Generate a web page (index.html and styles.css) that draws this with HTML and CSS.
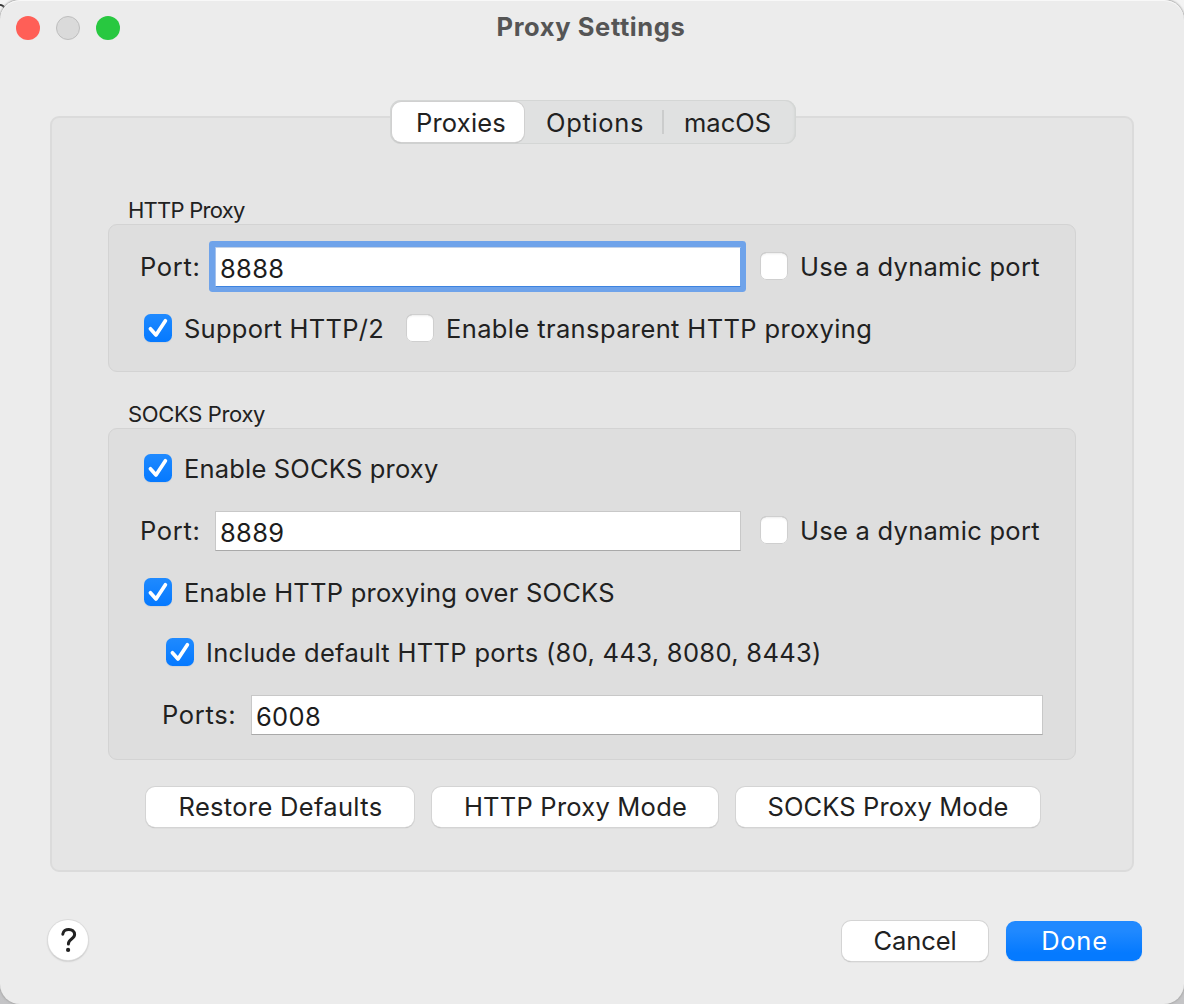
FILE: index.html
```
<!DOCTYPE html>
<html lang="en">
<head>
<meta charset="utf-8">
<title>Proxy Settings</title>
<link rel="stylesheet" href="styles.css">
</head>
<body>
<svg width="0" height="0" class="defs" aria-hidden="true">
  <symbol id="check" viewBox="0 0 28 28">
    <path d="M6.4 14.8 L12 21 L21.4 6.8" fill="none" stroke="#fff" stroke-width="3.7" stroke-linecap="round" stroke-linejoin="round"/>
  </symbol>
</svg>
<svg class="backdrop" viewBox="0 0 8 20" aria-hidden="true"><path d="M-1 5 Q3 4.5 4.5 8 M0 15 v3" fill="none" stroke="#333" stroke-width="1.8"/></svg>
<div class="window">
  <header class="titlebar">
    <span class="light close"></span>
    <span class="light minimize"></span>
    <span class="light expand"></span>
    <h1 class="title">Proxy Settings</h1>
  </header>

  <main class="panel">
    <nav class="tabs">
      <button class="tab active">Proxies</button>
      <button class="tab options">Options</button>
      <button class="tab macos">macOS</button>
    </nav>

    <h2 class="caption http">HTTP Proxy</h2>
    <section class="group http-group">
      <div class="row">
        <span class="label port">Port:</span>
        <div class="field focused"><span>8888</span></div>
        <span class="box dynamic"></span>
        <span class="label dynamic-text">Use a dynamic port</span>
      </div>
      <div class="row checks">
        <span class="box on"><svg><use href="#check"/></svg></span>
        <span class="label support">Support HTTP/2</span>
        <span class="box"></span>
        <span class="label transparent">Enable transparent HTTP proxying</span>
      </div>
    </section>

    <h2 class="caption socks">SOCKS Proxy</h2>
    <section class="group socks-group">
      <div class="row checks">
        <span class="box on"><svg><use href="#check"/></svg></span>
        <span class="label enable-socks">Enable SOCKS proxy</span>
      </div>
      <div class="row">
        <span class="label port">Port:</span>
        <div class="field"><span>8889</span></div>
        <span class="box dynamic"></span>
        <span class="label dynamic-text">Use a dynamic port</span>
      </div>
      <div class="row checks">
        <span class="box on"><svg><use href="#check"/></svg></span>
        <span class="label over-socks">Enable HTTP proxying over SOCKS</span>
      </div>
      <div class="row checks nested">
        <span class="box on"><svg><use href="#check"/></svg></span>
        <span class="label default-ports">Include default HTTP ports (80, 443, 8080, 8443)</span>
      </div>
      <div class="row nested">
        <span class="label ports">Ports:</span>
        <div class="field wide"><span>6008</span></div>
      </div>
    </section>

    <div class="modes">
      <button class="button restore">Restore Defaults</button>
      <button class="button http-mode">HTTP Proxy Mode</button>
      <button class="button socks-mode">SOCKS Proxy Mode</button>
    </div>
  </main>

  <footer class="footer">
    <button class="help" aria-label="Help">
      <svg viewBox="0 0 40 40"><path d="M14.8 14.2 C15.3 7.7 26.6 7.8 26.6 14.6 C26.6 19.2 20.4 19 20.4 23.9" fill="none" stroke="#222" stroke-width="3" stroke-linecap="round"/><circle cx="20.1" cy="29.9" r="2.1" fill="#222"/></svg>
    </button>
    <button class="button cancel">Cancel</button>
    <button class="button done">Done</button>
  </footer>
</div>
</body>
</html>
```
FILE: styles.css
```
* { box-sizing: border-box; }
body {
  margin: 0;
  height: 1004px;
  overflow: hidden;
  background: linear-gradient(#f4f4f4, #c4c4c6);
  color: #212121;
  font: 400 25.5px/36px Inter, "Liberation Sans", sans-serif;
}
.defs { display: none; }
.backdrop { position: absolute; left: 0; top: 0; width: 8px; height: 20px; z-index: -1; }
button { font: inherit; color: inherit; border: 0; padding: 0; white-space: nowrap; }
.window {
  height: 1004px;
  display: flex;
  flex-direction: column;
  background: #ececec;
  border-radius: 20px;
  box-shadow: inset 0 1px 0 #f8f8f8, 0 0 2px 1px #a8a8a8;
}

.titlebar { display: flex; gap: 16px; padding: 16px 16px 0; height: 116px; }
.light { width: 24px; height: 24px; border-radius: 50%; flex: none; }
.close { background: #ff5f57; }
.minimize { background: #dadada; border: 1px solid #bebebe; }
.expand { background: #28c840; }
.title {
  margin: -7px 0 0 360.6px;
  height: 36px;
  font: 700 25.5px/36px Inter, "Liberation Sans", sans-serif;
  letter-spacing: 0.6px;
  color: #555;
  white-space: nowrap;
}

.panel {
  display: flex;
  flex-direction: column;
  width: 1084px;
  height: 756px;
  margin-left: 50px;
  padding: 0 56px;
  background: #e5e5e5;
  border: 2px solid #dbdbdb;
  border-radius: 9px;
}
.tabs {
  display: flex;
  width: 406px;
  height: 44px;
  margin: -18px 0 0 282px;
  padding: 2px;
  flex: none;
  background: #e0e1e1;
  border-radius: 11px;
  box-shadow: inset 0 0 0 1px #d4d6d5, inset -3px 0 2px -1px #d6d8d7;
}
.tab { height: 40px; padding-top: 2px; text-align: left; background: none; border-radius: 9px; line-height: 38px; }
.tab.active {
  width: 132px;
  padding-left: 24px;
  letter-spacing: 0.2px;
  background: #fff;
  box-shadow: 0 0 0 1px #d0d0d0, 0 1px 1px 0 #a3a3a3;
}
.tab.options { width: 139px; padding-left: 22px; letter-spacing: 0.67px; position: relative; }
.tab.options::after {
  content: "";
  position: absolute;
  right: -1px;
  top: 8px;
  width: 2px;
  height: 24px;
  background: #cbcccc;
}
.tab.macos { padding-left: 21px; letter-spacing: 0; }

.caption { margin: 0; padding-left: 20px; height: 28px; flex: none; font-size: 22px; font-weight: 400; line-height: 28px; }
.caption.http { margin-top: 52px; letter-spacing: -0.74px; }
.caption.socks { margin-top: 28px; letter-spacing: -0.35px; }

.group {
  width: 968px;
  flex: none;
  background: #dedede;
  border: 1px solid #d3d3d3;
  border-radius: 9px;
  padding: 0 31px;
}
.http-group { height: 148px; padding-top: 21px; display: grid; grid-template-rows: 62px 62px; }
.socks-group { height: 332px; padding-top: 19px; display: grid; grid-template-rows: 62px 62px 60px 62px 40px; align-content: start; }
.row { display: flex; align-items: center; height: 40px; white-space: nowrap; }
.row.checks { padding-left: 4px; }
.row.nested { padding-left: 22px; }
.row.checks.nested { padding-left: 26px; }
.label { padding-top: 2px; flex: none; }

.port { width: 75px; letter-spacing: 0.65px; }
.ports { width: 89px; letter-spacing: 0.65px; }
.dynamic-text { letter-spacing: 0.27px; padding-left: 12px; }
.support { width: 234px; letter-spacing: 0.26px; padding-left: 12px; }
.transparent { letter-spacing: 0.38px; padding-left: 12px; }
.enable-socks { letter-spacing: 0.18px; padding-left: 12px; }
.over-socks { letter-spacing: 0.23px; padding-left: 12px; }
.default-ports { letter-spacing: 0.32px; padding-left: 12px; }

.field {
  width: 526px;
  height: 40px;
  margin-top: 2px;
  flex: none;
  padding: 2px 4px 0;
  line-height: 38px;
  letter-spacing: 0.3px;
  background: #fff;
  border: 1px solid #c8c8c8;
  border-bottom-color: #a9a9a9;
  color: #1c1c1c;
}
.field.wide { width: 792px; }
.field.focused {
  border-color: #c3d2e8 #6fa3ea #3d83e0 #a5c2ec;
  box-shadow: -0.5px -0.5px 0 5.5px #6fa3ea;
  border-radius: 1px;
}

.box {
  width: 28px;
  height: 28px;
  flex: none;
  background: #fff;
  border-radius: 6.5px;
  box-shadow: inset 0 0 0 1px #cfcfcf, inset 0 1px 0 #bcbcbc, inset 0 2px 2px #ececec;
}
.box.dynamic { margin-left: 19px; }
.box.on { background: linear-gradient(#1f8aff, #0579ff); box-shadow: 0 1px 1px #cdd2d9; }
.box svg { display: block; width: 28px; height: 28px; }

.modes { display: flex; gap: 18px; margin: 27px 0 0 38px; }
.button {
  height: 40px;
  line-height: 38px;
  text-align: center;
  background: #fff;
  border-radius: 9px;
  box-shadow: 0 0 0 1px #d4d4d4, 0 1px 1px 0 #9e9e9e;
}
.restore { width: 268px; letter-spacing: 0.32px; padding-left: 1px; }
.http-mode { width: 286px; letter-spacing: 0.23px; padding-left: 1px; }
.socks-mode { width: 304px; letter-spacing: 0.1px; }

.footer { display: flex; align-items: center; margin: 48px 42px 0 48px; height: 40px; }
.help {
  width: 40px;
  height: 40px;
  border-radius: 50%;
  background: #fff;
  box-shadow: 0 0 0 1px #dcdcdc, 0 1px 2px #9e9e9e;
}
.help svg { display: block; width: 40px; height: 40px; }
.footer .button { margin-top: 2px; }
.cancel { width: 146px; margin-left: auto; letter-spacing: -0.09px; }
.done {
  width: 136px;
  margin-left: 18px;
  padding-left: 1px;
  letter-spacing: 0.75px;
  color: #fff;
  background: linear-gradient(#2089ff 25%, #057aff 80%);
  box-shadow: 0 1px 1px #cfd8e4;
}
```
